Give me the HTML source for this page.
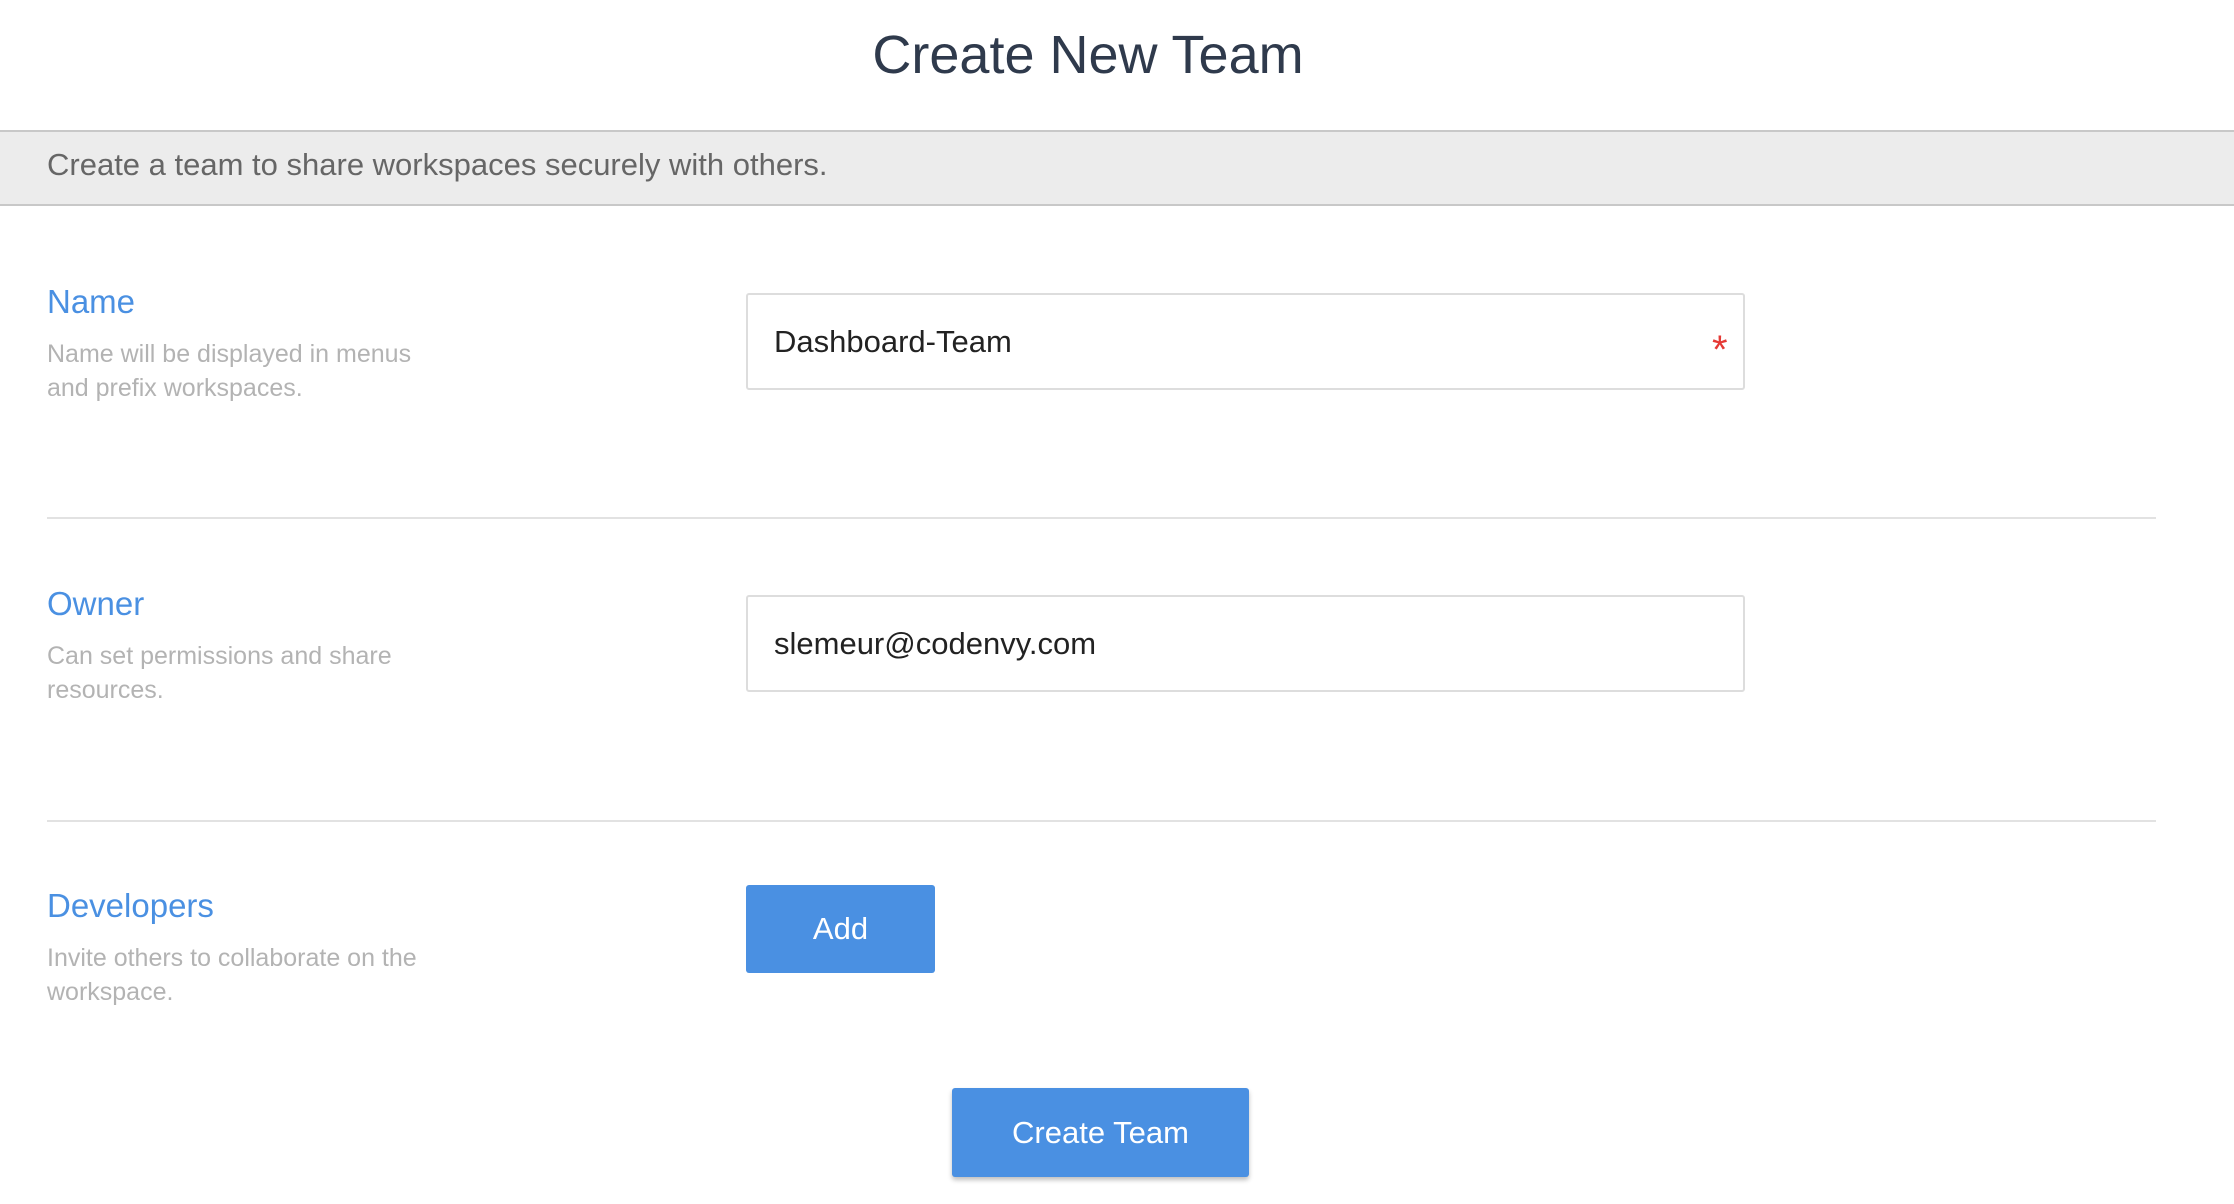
<!DOCTYPE html>
<html><head><meta charset="utf-8"><style>
*{margin:0;padding:0;box-sizing:border-box}
body{width:2234px;height:1204px;background:#fff;font-family:"Liberation Sans",sans-serif;position:relative;overflow:hidden}
.a{position:absolute;white-space:nowrap}
.title{left:0;width:2176px;text-align:center;top:23px;font-size:54px;color:#2f3a4c;line-height:64px}
.band{left:0;top:130px;width:2234px;height:76px;background:#ececec;border-top:2px solid #c8c8c8;border-bottom:2px solid #c8c8c8}
.bandt{left:47px;top:147px;font-size:31px;color:#666;line-height:36px}
.lbl{left:47px;font-size:33px;color:#4a90e2;line-height:40px}
.desc{left:47px;font-size:25px;color:#b3b3b3;line-height:34px;white-space:normal;width:430px}
.inp{left:746px;width:999px;height:97px;border:2px solid #ddd;border-radius:3px;background:#fff}
.it{left:774px;font-size:31px;color:#222;line-height:40px}
.hr{left:47px;width:2109px;height:2px;background:#e2e2e2}
.btn{background:#4a90e2;color:#fff;border-radius:3px;text-align:center;font-size:31px}
</style></head><body>
<div class="a title">Create New Team</div>
<div class="a band"></div>
<div class="a bandt">Create a team to share workspaces securely with others.</div>

<div class="a lbl" style="top:282px">Name</div>
<div class="a desc" style="top:337px">Name will be displayed in menus<br>and prefix workspaces.</div>
<div class="a inp" style="top:293px"></div>
<div class="a it" style="top:322px">Dashboard-Team</div>
<div class="a" style="left:1712px;top:330px;color:#e53935;font-size:40px;line-height:40px">*</div>
<div class="a hr" style="top:517px"></div>

<div class="a lbl" style="top:584px">Owner</div>
<div class="a desc" style="top:639px">Can set permissions and share<br>resources.</div>
<div class="a inp" style="top:595px"></div>
<div class="a it" style="top:624px">slemeur@codenvy.com</div>
<div class="a hr" style="top:820px"></div>

<div class="a lbl" style="top:886px">Developers</div>
<div class="a desc" style="top:941px">Invite others to collaborate on the<br>workspace.</div>
<div class="a btn" style="left:746px;top:885px;width:189px;height:88px;line-height:88px">Add</div>

<div class="a btn" style="left:952px;top:1088px;width:297px;height:89px;line-height:89px;box-shadow:0 3px 5px rgba(0,0,0,0.25)">Create Team</div>
</body></html>
